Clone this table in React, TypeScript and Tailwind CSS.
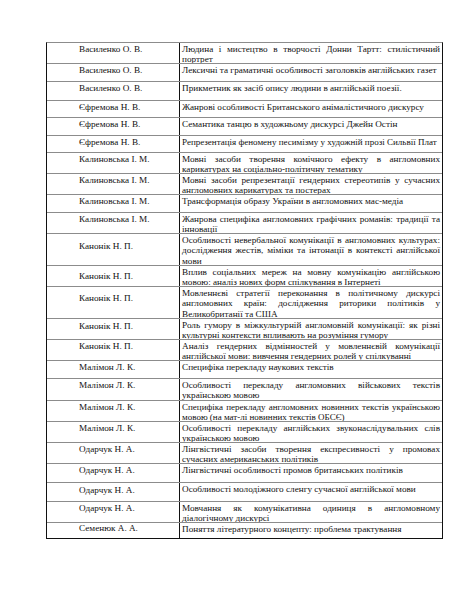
import React from "react";

type Row = { name: string; title: string; h: string; np: string; fs?: string };

const rows: Row[] = [
  { name: "Василенко О. В.", title: "Людина і мистецтво в творчості Донни Тартт: стилістичний портрет", h: "h-[21px]", np: "pt-[1px]" },
  { name: "Василенко О. В.", title: "Лексичні та граматичні особливості заголовків англійських газет", h: "h-[18px]", np: "pt-[1px]" },
  { name: "Василенко О. В.", title: "Прикметник як засіб опису людини в англійській поезії.", h: "h-[19px]", np: "pt-[1px]" },
  { name: "Єфремова Н. В.", title: "Жанрові особливості Британського анімалістичного дискурсу", h: "h-[17px]", np: "pt-[1px]" },
  { name: "Єфремова Н. В.", title: "Семантика танцю в художньому дискурсі Джейн Остін", h: "h-[18px]", np: "pt-[1px]" },
  { name: "Єфремова Н. В.", title: "Репрезентація феномену песимізму у художній прозі Сильвії Плат", h: "h-[17px]", np: "pt-[1px]", fs: "text-[9px]" },
  { name: "Калиновська І. М.", title: "Мовні засоби творення комічного ефекту в англомовних карикатурах на соціально-політичну тематику", h: "h-[21px]", np: "pt-[1px]" },
  { name: "Калиновська І. М.", title: "Мовні засоби репрезентації гендерних стереотипів у сучасних англомовних карикатурах та постерах", h: "h-[21px]", np: "pt-[1px]" },
  { name: "Калиновська І. М.", title: "Трансформація образу України в англомовних мас-медіа", h: "h-[18px]", np: "pt-[1px]" },
  { name: "Калиновська І. М.", title: "Жанрова специфіка англомовних графічних романів: традиції та інновації", h: "h-[21px]", np: "pt-[1px]" },
  { name: "Канонік Н. П.", title: "Особливості невербальної комунікації в англомовних культурах: дослідження жестів, міміки та інтонації в контексті англійської мови", h: "h-[32px]", np: "pt-[7px]" },
  { name: "Канонік Н. П.", title: "Вплив соціальних мереж на мовну комунікацію англійською мовою: аналіз нових форм спілкування в Інтернеті", h: "h-[21px]", np: "pt-[5px]" },
  { name: "Канонік Н. П.", title: "Мовленнєві стратегії переконання в політичному дискурсі англомовних країн: дослідження риторики політиків у Великобританії та США", h: "h-[32px]", np: "pt-[6px]" },
  { name: "Канонік Н. П.", title: "Роль гумору в міжкультурній англомовній комунікації: як різні культурні контексти впливають на розуміння гумору", h: "h-[21px]", np: "pt-[2px]" },
  { name: "Канонік Н. П.", title: "Аналіз гендерних відмінностей у мовленнєвій комунікації англійської мови: вивчення гендерних ролей  у спілкуванні", h: "h-[21px]", np: "pt-[1px]" },
  { name: "Малімон Л. К.", title: "Специфіка перекладу наукових текстів", h: "h-[18px]", np: "pt-[1px]" },
  { name: "Малімон Л. К.", title: "Особливості перекладу англомовних військових текстів українською мовою", h: "h-[22px]", np: "pt-[1px]" },
  { name: "Малімон Л. К.", title: "Специфіка перекладу англомовних новинних текстів українською мовою (на мат-лі новинних текстів ОБСЄ)", h: "h-[21px]", np: "pt-[1px]", fs: "text-[9px]" },
  { name: "Малімон Л. К.", title: "Особливості перекладу англійських звуконаслідувальних слів українською мовою", h: "h-[21px]", np: "pt-[1px]" },
  { name: "Одарчук Н. А.", title: "Лінгвістичні засоби творення експресивності у промовах сучасних американських політиків", h: "h-[21px]", np: "pt-[1px]" },
  { name: "Одарчук Н. А.", title: "Лінгвістичні особливості промов британських політиків", h: "h-[19px]", np: "pt-[1px]" },
  { name: "Одарчук Н. А.", title: "Особливості молодіжного сленгу сучасної англійської мови", h: "h-[19px]", np: "pt-[2px]" },
  { name: "Одарчук Н. А.", title: "Мовчання як комунікативна одиниця в англомовному діалогічному дискурсі", h: "h-[21px]", np: "pt-[1px]" },
  { name: "Семенюк А. А.", title: "Поняття літературного концепту: проблема трактування", h: "h-[15px]", np: "pt-[0px]" },
];

export default function App() {
  return (
    <div
      className="w-[463px] h-[599px] bg-white pl-[46px] pt-[42px] text-[#111]"
      style={{ fontFamily: '"Liberation Serif", "Times New Roman", serif' }}
    >
      <div className="w-[397px] border-l border-r border-t border-b border-l-[#111] border-r-[#111] border-b-[#111] border-t-[#8c8c8c]">
        {rows.map((r, i) => (
          <div
            key={i}
            className={`grid grid-cols-[132px_1fr] ${r.h} ${i < rows.length - 1 ? "border-b border-[#8c8c8c]" : ""}`}
          >
            <div className={`pl-[32px] text-[9.2px] leading-[10.3px] whitespace-nowrap ${r.np}`}>{r.name}</div>
            <div className={`border-l border-[#111] pl-[2px] pr-[2px] pt-[1px] ${r.fs ?? "text-[9.2px]"} leading-[10.3px] text-justify overflow-hidden`}>
              {r.title}
            </div>
          </div>
        ))}
      </div>
    </div>
  );
}
